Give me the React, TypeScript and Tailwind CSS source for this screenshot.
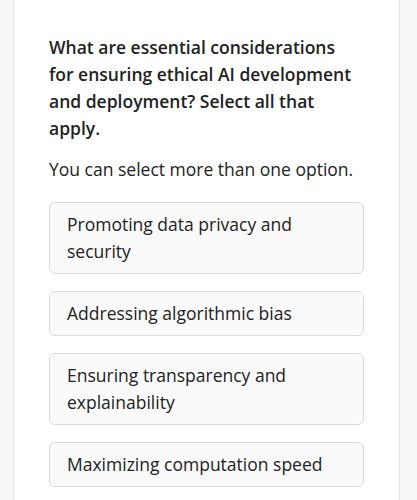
import React from "react";

const options = [
  "Promoting data privacy and security",
  "Addressing algorithmic bias",
  "Ensuring transparency and explainability",
  "Maximizing computation speed",
];

export default function App() {
  return (
    <div
      className="min-h-[500px] bg-[#f7f7f7] pl-[13px] pr-[17px]"
      style={{ fontFamily: '"Open Sans", "Noto Sans", sans-serif' }}
    >
      <div className="min-h-[500px] border-x border-[#e3e3e3] bg-white px-[35px] pt-[34px] pb-[12px]">
        <h1 className="text-[17.5px] font-semibold leading-[27px] text-[#222]">
          What are essential considerations for ensuring ethical AI development and deployment? Select all that apply.
        </h1>
        <p className="mt-[14px] text-[17.5px] leading-[27px] text-[#222]">
          You can select more than one option.
        </p>
        <div className="mt-[19px] flex flex-col gap-[17px]">
          {options.map((o) => (
            <button
              key={o}
              className="w-full rounded-[6px] border border-[#dcdcdc] bg-[#fafafa] px-[17px] py-[8px] text-left text-[17.5px] leading-[27px] text-[#222]"
            >
              {o}
            </button>
          ))}
        </div>
      </div>
    </div>
  );
}
